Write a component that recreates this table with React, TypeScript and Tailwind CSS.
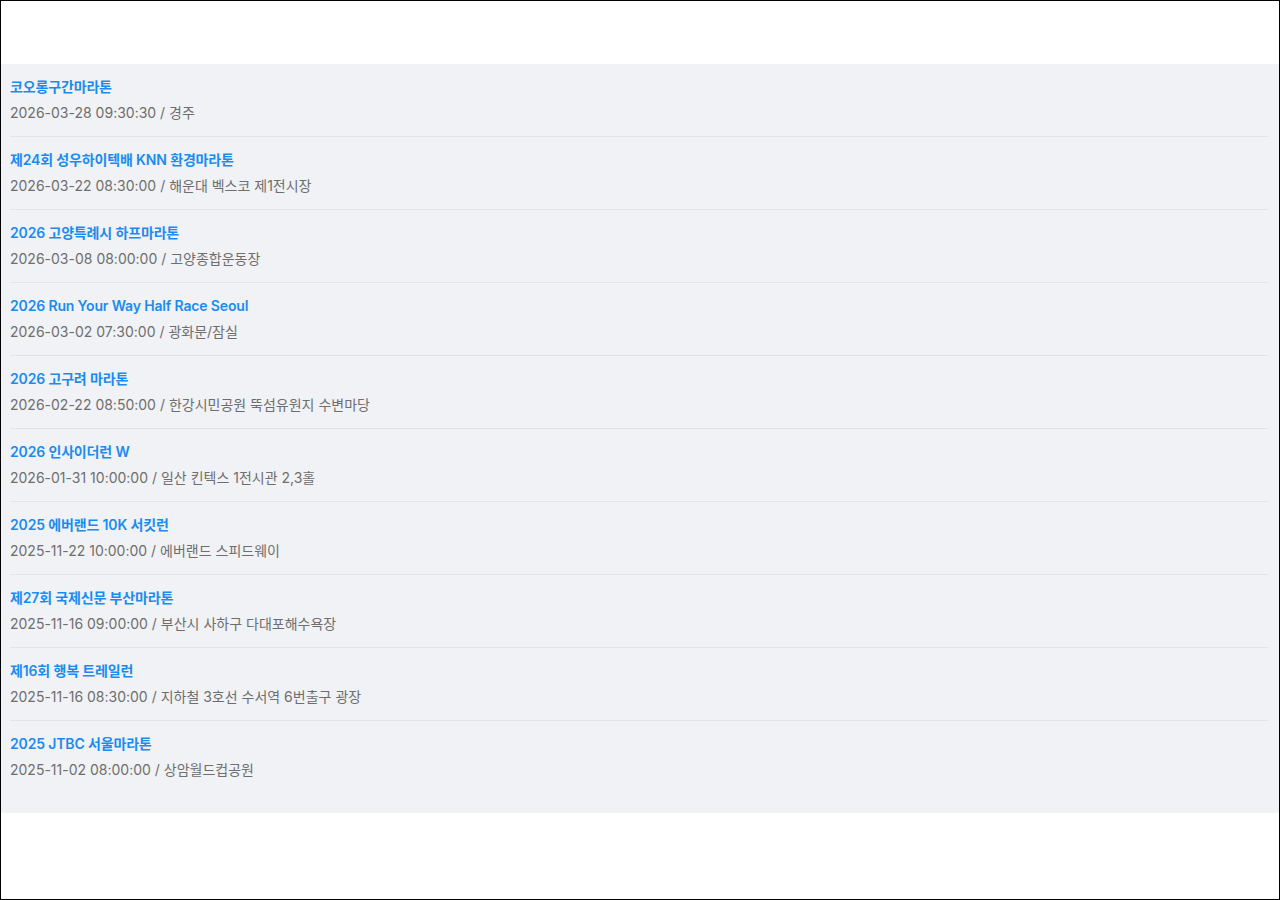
import React from 'react';

interface Race {
  title: string;
  date: string;
  place: string;
}

const races: Race[] = [
  { title: '코오롱구간마라톤', date: '2026-03-28 09:30:30', place: '경주' },
  { title: '제24회 성우하이텍배 KNN 환경마라톤', date: '2026-03-22 08:30:00', place: '해운대 벡스코 제1전시장' },
  { title: '2026 고양특례시 하프마라톤', date: '2026-03-08 08:00:00', place: '고양종합운동장' },
  { title: '2026 Run Your Way Half Race Seoul', date: '2026-03-02 07:30:00', place: '광화문/잠실' },
  { title: '2026 고구려 마라톤', date: '2026-02-22 08:50:00', place: '한강시민공원 뚝섬유원지 수변마당' },
  { title: '2026 인사이더런 W', date: '2026-01-31 10:00:00', place: '일산 킨텍스 1전시관 2,3홀' },
  { title: '2025 에버랜드 10K 서킷런', date: '2025-11-22 10:00:00', place: '에버랜드 스피드웨이' },
  { title: '제27회 국제신문 부산마라톤', date: '2025-11-16 09:00:00', place: '부산시 사하구 다대포해수욕장' },
  { title: '제16회 행복 트레일런', date: '2025-11-16 08:30:00', place: '지하철 3호선 수서역 6번출구 광장' },
  { title: '2025 JTBC 서울마라톤', date: '2025-11-02 08:00:00', place: '상암월드컵공원' },
];

const App: React.FC = () => {
  return (
    <div
      className="h-[900px] w-[1280px] border border-black bg-white"
      style={{ fontFamily: 'Inter, "Noto Sans CJK KR", sans-serif' }}
    >
      <div className="h-[63px]" />
      <ul className="bg-[#f0f2f5] pl-[9px] pr-[11px] pb-[20px]">
        {races.map((race, i) => (
          <li
            key={i}
            className={`py-[13px] ${i < races.length - 1 ? 'border-b border-[#e1e4e8]' : ''}`}
          >
            <div className="text-[14px] leading-[20px] font-semibold tracking-[-0.15px] text-[#1a8cf0]">
              {race.title}
            </div>
            <div className="mt-[6px] text-[14px] leading-[20px] text-[#6e6e6e]">
              {race.date} / {race.place}
            </div>
          </li>
        ))}
      </ul>
    </div>
  );
};

export default App;
